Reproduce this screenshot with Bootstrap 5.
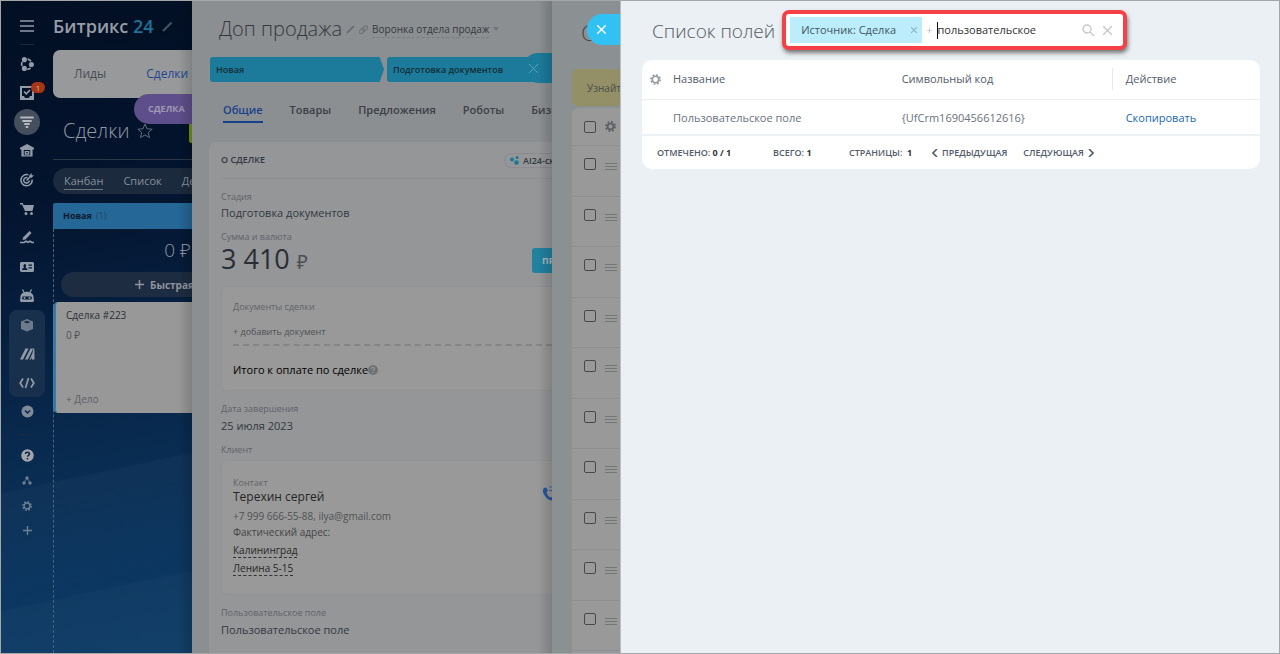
<!DOCTYPE html>
<html lang="ru">
<head>
<meta charset="utf-8">
<meta name="viewport" content="width=device-width, initial-scale=1">
<title>Битрикс 24</title>
<link rel="stylesheet" href="https://cdn.jsdelivr.net/npm/bootstrap@5.3.0/dist/css/bootstrap.min.css">
<style>
body{font-family:"Open Sans","Noto Sans",sans-serif;font-size:12px;line-height:16px;color:#535c69;background:#eaeff3}
a{text-decoration:none;color:inherit}
svg{display:block;flex:none}
button{font:inherit;color:inherit}
.shell{height:100vh;border:1px solid #a5a6a8;overflow:hidden}
.nowrap-all,.nowrap-all *{white-space:nowrap}
h1,h2{margin:0;font-weight:300;line-height:28px}
.t9{font-size:9px}.t10{font-size:10px}.t11{font-size:11px}
/* left area */
.portal{width:191px;background:linear-gradient(168deg,transparent 71%,rgba(255,255,255,.025) 71.2%,transparent 88%,rgba(255,255,255,.02) 88.2%),linear-gradient(170deg,#020f23 0,#03142e 30%,#082649 60%,#0b355e 84%,#0d3c66 100%)}
.portal::after,.deal::after{content:"";position:absolute;right:0;top:0;bottom:0;width:14px;background:linear-gradient(90deg,transparent,rgba(0,0,0,.16));pointer-events:none}
.side{width:52px;padding-top:10px;color:#929ba8}
.side a{width:36px;height:29px;display:flex;align-items:center;justify-content:center;position:relative}
.side .round{width:26px;height:26px;border-radius:50%;background:#454e5c;display:flex;align-items:center;justify-content:center}
.side .grp{background:#18304c;border-radius:8px}
.side .small-item{height:25px;color:#6f7f93}
.side .rule{width:14px;height:1px;background:#1b2a3c}
.counter{position:absolute;left:22px;top:4px;width:14px;height:11px;border-radius:6px;background:#a83615;color:#bbb;font-size:8px;line-height:11px;text-align:center}
.crm{min-width:0}
.logo{font-size:18px;font-weight:600;line-height:28px;color:#969da6;padding-top:11px}
.menu{background:#98999b;border-radius:7px 0 0 7px;height:48px;margin-top:10px;padding-left:21px;gap:40px;color:#484d54}
.tag-deal{position:absolute;left:133px;top:93px;width:58px;height:30px;border-radius:15px 0 0 15px;background:#5f4e8c;color:#9d98b4;font-weight:700;line-height:30px;padding-left:14px}
.green{width:3px;height:21px;background:#74911a;border-radius:2px 0 0 2px}
.headline{height:61px;padding-left:10px;color:#929aa5}
.pills{margin-top:8px;height:26px;background:#1b2a3d;border-radius:13px 0 0 13px;padding-left:11px;gap:20px;color:#88909b}
.stage{margin-top:9px;height:26px;background:#256797;border-radius:2px 0 0 0;padding-left:10px;color:#0c1a2c}
.column{border-left:1px dashed #49627e}
.total{padding:8px 1px 0 0;font-size:19px;font-weight:300;line-height:27px;color:#8b95a2}
.quick{margin:8px 0 5px 7px;width:131px;height:25px;border:0;border-radius:13px 0 0 13px;background:#1d2c41;color:#8e959f;padding:0 0 0 74px;gap:6px;overflow:hidden}
.deal-card{margin-left:-1px;height:111px;background:#989898;border-left:3px solid #3a7ba6;border-radius:5px 0 0 5px;padding:5px 0 6px 10px;color:#2d3136}
/* deal slider */
.deal{width:360px;background:#8c8f91;color:#33383f}
.steps{gap:3px;margin:14px 0 0 18px}
.steps button{height:25px;border:0;background:#1c7b9b;color:#122b35;font-weight:600;text-align:left;padding:0 6px;border-radius:3px;font-size:9px}
.steps .first{width:174px;flex:none;clip-path:polygon(0 0,97.5% 0,100% 50%,97.5% 100%,0 100%)}
.tabs{margin:17px 0 0 31px;gap:27px;font-weight:600;color:#3a4047}
.tabs a{height:24px;padding-top:3px;border-bottom:2px solid transparent}
.tabs .on{color:#18418b;border-color:#18418b}
.about{margin:19px 0 0 17px;background:#949698;border-radius:8px 0 0 0;padding-left:12px}
.about-head{height:37px;border-bottom:1px solid #8c8e90}
.chip{border:1px solid #898b8d;border-right:0;border-radius:8px 0 0 8px;height:15px;line-height:13px;padding-left:5px;gap:4px;width:48px;overflow:hidden;font-weight:600}
.lab{color:#5f6368;font-size:9px}
.inner{background:#999;border:1px solid #919293;border-right:0;border-radius:6px 0 0 6px;padding-left:11px}
.amount{font-size:27px;line-height:28px;color:#292e36}
.amount span{font-size:19px;line-height:19px;color:#4b5056}
.dash{border-bottom:2px dashed #858585}
.pay{width:20px;height:25px;overflow:hidden;border:0;border-radius:3px 0 0 3px;background:#21829f;color:#a8b9bf;font-weight:700;padding:0 0 0 10px;text-align:left}
.dotted{border-bottom:1px dashed #333;color:#262626}
.tabx{position:absolute;right:0;top:52px;width:29px;height:30px;border:0;border-radius:15px 0 0 15px;background:#1c7b9b;color:#5ba0b5;padding:0 0 0 6px}
/* settings slider */
.setup{width:68px;background:#8b9192}
.setup h2{padding:17px 0 0 29px;font-size:22px;color:#44484c}
.notice{margin:23px 0 2px 20px;height:37px;background:#939067;border-radius:5px 0 0 5px;padding-left:15px;color:#4b4c48}
.rows{margin-left:20px;background:#999;border-radius:6px 0 0 0}
.rows label{border-bottom:1px solid #8f8f8f;padding:12px 0 0 12px;height:50px;gap:9px;color:#73777c}
.rows label:nth-child(even){height:51px}
.rows label:first-child{height:38px;padding-top:13px}
.rows .form-check-input{width:12px;height:12px;margin:0;border:1px solid #484848;background-color:transparent;border-radius:2px}
.blue-x{position:absolute;right:-1px;top:13px;width:34px;height:31px;border:0;border-radius:15px 0 0 15px;background:#31c1f2;color:#fff;padding:0 0 0 10px}
/* top slider */
.top-panel{background:#ebf0f4;border-left:1px solid #b9bdc1;padding:9px 19px 0 21px}
.top-panel h1{font-size:19px;color:#545a61;padding:2px 7px 0 10px}
.finder{width:345px;height:40px;background:#fff;border:4px solid #f54145;border-radius:7px;box-shadow:1px 3px 4px rgba(0,0,0,.5);padding:0 11px 0 4px}
.token{height:26px;width:132px;background:#bcedfc;padding:0 5px 0 11px;color:#43545e}
.caret{width:1px;height:17px;background:#111;flex:none}
.finder input{border:0;outline:0;padding:0;min-width:0;color:#333}
.icon-btn{border:0;background:none;padding:0;color:#c3c6ca}
.grid-card{background:#fff;border-radius:10px;margin-top:10px}
.grid-card table{table-layout:fixed;width:100%;margin:0}
.grid-card th{font-weight:400;height:39px;padding:0;border-bottom:1px solid #eaeef1;color:#535c69}
.grid-card td{height:36px;padding:3px 0 0;border-bottom:2px solid #edf2f5;color:#6a727d}
.act{border-left:1px solid #e6e9ec;padding:3px 0 3px 13px}
.pager{height:33px;padding-left:15px;color:#535c69}
.pager b{color:#333;font-weight:700}
.w-total{width:116px}.w-all{width:76px}.w-pages{width:83px}
</style>
</head>
<body>
<div class="shell d-flex">

  <section class="portal d-flex position-relative flex-shrink-0 overflow-hidden nowrap-all">
    <nav class="side d-flex flex-column align-items-center flex-shrink-0" aria-label="Меню">
      <a href="#" aria-label="Меню"><svg width="14" height="12" viewBox="0 0 14 12" stroke="currentColor" stroke-width="1.3"><path d="M0 1h14M0 6h14M0 11h14"/></svg></a>
      <span class="rule mt-1 mb-1"></span>
      <a href="#" aria-label="Совместная работа"><svg width="14" height="14" viewBox="0 0 16 16" fill="currentColor"><circle cx="5" cy="3" r="2.900"/><circle cx="13" cy="8.500" r="2.900"/><circle cx="5" cy="13" r="2.900"/><path d="M9.500 2.500l2.500 1.700M2 6.500v3M9 14l2.500-1" stroke="currentColor" stroke-width="2" stroke-linecap="round"/></svg></a>
      <a href="#" aria-label="Задачи"><svg width="14" height="14" viewBox="0 0 14 14" fill="none" stroke="currentColor" stroke-width="2"><path d="M1 1h12v12H1z"/><path d="M1 10h3l1 2h4l1-2h3v3H1z" fill="currentColor" stroke="none"/><path d="M4 5.500l2.300 2.300L10 4" stroke-width="1.700"/></svg><span class="counter">1</span></a>
      <a href="#" aria-label="CRM"><span class="round"><svg width="14" height="12" viewBox="0 0 14 12" stroke="#b5b8bc" stroke-width="2" stroke-linecap="round"><path d="M1 1.500h12M3 5h8M5 8h4M6.500 11h1" /></svg></span></a>
      <a href="#" aria-label="Склад"><svg width="14" height="13" viewBox="0 0 15 14" fill="currentColor" fill-rule="evenodd"><path d="M7.500 0L15 4v2h-1.500v7.500h-12V6H0V4zM4 6.500V12h7V6.500z"/><path d="M5 7.500h5v4H5zm1.500 1.300V10H8.500V8.800z"/></svg></a>
      <a href="#" aria-label="Маркетинг"><svg width="14" height="14" viewBox="0 0 15 15" fill="none" stroke="currentColor" stroke-width="1.700"><path d="M9 2A6 6 0 1 0 13 7M8 5a3 3 0 1 0 2 3M7 8l4-4"/><path d="M10 4.500V2.500L12.500 0v2.500H15L12.500 5z" fill="currentColor" stroke="none"/></svg></a>
      <a href="#" aria-label="Магазины"><svg width="15" height="14" viewBox="0 0 15 14" fill="currentColor"><path d="M0 1h2.800l.7 2H14l-1.600 6H5L2 2.500H0z"/><circle cx="6" cy="11.500" r="1.500"/><circle cx="11.500" cy="11.500" r="1.500"/></svg></a>
      <a href="#" aria-label="Подпись"><svg width="15" height="13" viewBox="0 0 15 13" fill="currentColor"><path d="M9.500 0l2 2-6 6.500L2.500 9l.8-2.800z"/><path d="M0 11.500h4l2-1.200 2 1 2-1 2 1.200h2" fill="none" stroke="currentColor" stroke-width="1.700"/></svg></a>
      <a href="#" aria-label="Сотрудники"><svg width="14" height="12" viewBox="0 0 14 12" fill="currentColor" fill-rule="evenodd"><path d="M1 1h12l1 1v8l-1 1H1l-1-1V2zM2 9h5.500c0-1.500-1-2-2-2.300C6.500 5 6 3 4.800 3S3 5 4 6.700C3 7 2 7.500 2 9zM8.500 3.500v1.300H12V3.500zm0 2.700v1.300H12V6.200z"/></svg></a>
      <a href="#" aria-label="Роботизация"><svg width="14" height="13" viewBox="0 0 14 13" fill="currentColor" fill-rule="evenodd"><path d="M2.500 .5l1.500 3M11.500 .5L10 3.500" stroke="currentColor" stroke-width="1.300"/><path d="M.5 7.500C1 1 13 1 13.500 7.500L14 12l-1 1H1l-1-1zM3 7.500c-1.200 0-1.200 3 0 3h8c1.200 0 1.200-3 0-3z"/><circle cx="4.500" cy="9" r="1"/><circle cx="9.500" cy="9" r="1"/></svg></a>
      <div class="grp">
        <a href="#" aria-label="Каталог"><svg width="14" height="14" viewBox="0 0 14 14" fill="#6e7b8b" fill-rule="evenodd"><path d="M7 1l6 2.500v7.500L7 13.500 1 11V3.500zM3.500 4L7 5.500 10.500 4 7 2.700z"/></svg></a>
        <a href="#" aria-label="Маркет"><svg width="15" height="12" viewBox="0 0 15 12" fill="currentColor"><path d="M0 11.500L5.500 .5h3L3 11.500zM5 11.500L10.500 .5h2.800L7.800 11.500zM9.500 11.500l3-6.500 1-4.500h.8l.2 11h-2.500V9l-1 2.500z"/></svg></a>
        <a href="#" aria-label="Разработчикам"><svg width="16" height="12" viewBox="0 0 16 12" fill="none" stroke="currentColor" stroke-width="1.700"><path d="M4 1.500L1.200 6 4 10.500M12 1.500L14.800 6 12 10.500M9.500 1l-3 10"/></svg></a>
      </div>
      <a href="#" aria-label="Ещё"><svg width="13" height="13" viewBox="0 0 13 13"><circle cx="6.500" cy="6.500" r="6" fill="#7f8a99"/><path d="M4 5.500L6.500 8 9 5.500" fill="none" stroke="#0a2547" stroke-width="1.500"/></svg></a>
      <span class="rule mt-2 mb-2"></span>
      <a class="small-item" href="#" aria-label="Помощь"><svg width="13" height="13" viewBox="0 0 13 13"><circle cx="6.500" cy="6.500" r="6.200" fill="#a3a7ad"/><path d="M4.500 5c0-2.500 4-2.400 4 0 0 1.300-2 1.300-2 2.800M6.500 9v1.500" fill="none" stroke="#082348" stroke-width="1.500"/></svg></a>
      <a class="small-item" href="#" aria-label="Структура"><svg width="10" height="9" viewBox="0 0 10 9" fill="currentColor"><circle cx="5" cy="2" r="1.700"/><circle cx="2" cy="7" r="1.700"/><circle cx="8" cy="7" r="1.700"/><path d="M5 2L2.500 6M5 2l2.500 4" stroke="currentColor" stroke-width=".8"/></svg></a>
      <a class="small-item" href="#" aria-label="Настройки"><svg width="10" height="10" viewBox="0 0 12 12" fill="none" stroke="currentColor"><circle cx="6" cy="6" r="3.500" stroke-width="1.800"/><circle cx="6" cy="6" r="5" stroke-width="1.800" stroke-dasharray="2 1.930"/></svg></a>
      <a class="small-item" href="#" aria-label="Добавить"><svg width="9" height="9" viewBox="0 0 9 9" stroke="currentColor" stroke-width="1.400"><path d="M0 4.500h9M4.500 0v9"/></svg></a>
    </nav>

    <div class="crm d-flex flex-column flex-grow-1">
      <div class="logo d-flex align-items-center gap-2"><span>Битрикс <span style="color:#1d7397">24</span></span><svg width="11" height="11" viewBox="0 0 11 11" stroke="#46525f" stroke-width="2.200"><path d="M1 10L9.500 1.500"/></svg></div>
      <div class="menu d-flex align-items-center"><a href="#">Лиды</a><a href="#" style="color:#1e468f">Сделки</a></div>
      <div class="headline d-flex align-items-center">
        <h2 class="pt-1 fs-5">Сделки</h2>
        <svg class="ms-2 mt-1" width="16" height="16" viewBox="0 0 16 16" fill="none" stroke="#626d7a" stroke-width="1"><path d="M8 1l2 4.800 5.200.4-4 3.400 1.300 5L8 11.900l-4.500 2.700 1.300-5-4-3.400L6 5.800z"/></svg>
        <span class="green ms-auto mt-2"></span>
      </div>
      <div style="height:1px;background:#2c3848"></div>
      <div class="pills d-flex align-items-center t11"><a href="#" class="border-bottom border-secondary">Канбан</a><a href="#">Список</a><a href="#">Дела</a></div>
      <div class="stage d-flex align-items-center t9 gap-1"><span class="fw-bold">Новая</span><span style="color:#1b4768">(1)</span></div>
      <div class="column flex-grow-1">
        <div class="total text-end">0 ₽</div>
        <button class="quick d-flex align-items-center t10 fw-bold"><svg width="9" height="9" viewBox="0 0 9 9" stroke="currentColor" stroke-width="1.500"><path d="M0 4.500h9M4.500 0v9"/></svg>Быстрая сделка</button>
        <div class="deal-card d-flex flex-column t10"><span>Сделка #223</span><span class="mt-1" style="color:#4e5359">0 ₽</span><a href="#" class="mt-auto" style="color:#5c6065">+ Дело</a></div>
      </div>
    </div>
    <span class="tag-deal t9">СДЕЛКА</span>
  </section>

  <section class="deal position-relative flex-shrink-0 overflow-hidden nowrap-all">
    <div class="d-flex align-items-center" style="padding:14px 0 0 27px">
      <h2 style="font-size:20px">Доп продажа</h2>
      <svg class="ms-1" width="9" height="9" viewBox="0 0 9 9" stroke="#66696d" stroke-width="1.700"><path d="M1 8l7-7"/></svg>
      <svg class="mx-1" width="9" height="9" viewBox="0 0 9 9" fill="none" stroke="#6e7175"><rect x="-.500" y="4" width="6" height="3.500" rx="1.700" transform="rotate(-45 3 5.500)"/><rect x="3" y="1.700" width="6" height="3.500" rx="1.700" transform="rotate(-45 6 3.500)"/></svg>
      <a href="#" class="t10" style="border-bottom:1px dashed #797c7f">Воронка отдела продаж</a>
      <svg class="ms-1" width="6" height="4" fill="#727578"><path d="M0 0h6L3 4z"/></svg>
    </div>
    <div class="steps d-flex"><button class="first">Новая</button><button class="flex-grow-1">Подготовка документов</button></div>
    <nav class="tabs d-flex t11"><a href="#" class="on">Общие</a><a href="#">Товары</a><a href="#">Предложения</a><a href="#">Роботы</a><a href="#">Бизнес-процессы</a></nav>
    <div class="about">
      <div class="about-head d-flex align-items-center justify-content-between t9 fw-semibold"><span>О СДЕЛКЕ</span><span class="chip d-flex align-items-center t9"><svg width="9" height="9" viewBox="0 0 9 9" fill="#1b7897"><circle cx="2" cy="3.500" r="2"/><circle cx="7" cy="1.500" r="1.500"/><circle cx="6.500" cy="6.500" r="2.300"/></svg>AI24-скрипты</span></div>
      <div style="padding-top:10px"><div class="lab">Стадия</div><div class="t11">Подготовка документов</div></div>
      <div class="d-flex justify-content-between align-items-end mt-2">
        <div><div class="lab">Сумма и валюта</div><div class="amount">3 410 <span>₽</span></div></div>
        <button class="pay t9">ПРИНЯТЬ ОПЛАТУ</button>
      </div>
      <div class="inner" style="margin-top:13px;padding-top:12px;padding-bottom:12px">
        <div class="lab">Документы сделки</div>
        <div class="dash pb-1 mb-3 t9" style="margin-top:9px"><a href="#" style="color:#4f5154">+ добавить документ</a></div>
        <div class="d-flex align-items-center t11 text-black">Итого к оплате по сделке<svg width="10" height="10" viewBox="0 0 13 13"><circle cx="6.500" cy="6.500" r="6.500" fill="#707276"/><path d="M4.500 5c0-2.500 4-2.400 4 0 0 1.300-2 1.300-2 2.800M6.500 9v1.500" fill="none" stroke="#999" stroke-width="1.400"/></svg></div>
      </div>
      <div class="lab" style="margin-top:10px">Дата завершения</div><div class="t11" style="margin-top:1px">25 июля 2023</div>
      <div class="lab mt-2">Клиент</div>
      <div class="inner d-flex justify-content-between" style="margin-top:2px;padding-top:16px;padding-bottom:18px">
        <div>
          <div class="lab" style="line-height:12px">Контакт</div>
          <div style="color:#262626">Терехин сергей</div>
          <div class="t10" style="margin-top:3px;color:#4f5154">+7 999 666-55-88, ilya@gmail.com</div>
          <div class="t10" style="color:#434446">Фактический адрес:</div>
          <div class="t10" style="margin-top:2px"><span class="dotted">Калининград</span></div>
          <div class="t10" style="margin-top:2px"><span class="dotted">Ленина 5-15</span></div>
        </div>
        <svg class="mt-2" width="10" height="17" viewBox="0 0 10 17"><path d="M2 3C0 5 1 8 3 11s5 5 8 4l-1-3-2 .5C6 11 5 9 4.500 7l1.500-1-1.500-3.500z" fill="#28549b"/><path d="M7 2h3M7 5l3 1" stroke="#466aa0" stroke-width="1.200"/></svg>
      </div>
      <div class="lab" style="margin-top:10px">Пользовательское поле</div><div class="t11" style="padding:1px 0 30px">Пользовательское поле</div>
    </div>
    <button class="tabx" aria-label="Закрыть"><svg width="9" height="9" viewBox="0 0 9 9" stroke="currentColor"><path d="M0 0l9 9M9 0L0 9"/></svg></button>
  </section>

  <section class="setup position-relative flex-shrink-0 nowrap-all">
    <div class="overflow-hidden h-100">
      <h2>Список</h2>
      <div class="notice d-flex align-items-center t10">Узнайте больше</div>
      <div class="rows" id="rows">
        <label class="d-flex"><input type="checkbox" class="form-check-input flex-shrink-0" aria-label="Выбрать все"><svg width="11" height="11" viewBox="0 0 12 12" fill="none" stroke="#5e6266"><circle cx="6" cy="6" r="3.200" stroke-width="2"/><circle cx="6" cy="6" r="5" stroke-width="2" stroke-dasharray="2 1.930"/></svg></label>
      </div>
    </div>
    <button class="blue-x" aria-label="Закрыть"><svg width="9" height="9" viewBox="0 0 9 9" stroke="currentColor" stroke-width="1.400"><path d="M0 0l9 9M9 0L0 9"/></svg></button>
  </section>

  <main class="top-panel flex-grow-1 position-relative">
    <div class="d-flex align-items-center">
      <h1 class="text-nowrap">Список полей</h1>
      <div class="finder d-flex align-items-center t11">
        <span class="token d-flex align-items-center justify-content-between flex-shrink-0"><span class="text-nowrap">Источник: Сделка</span><button class="icon-btn" style="color:#8cb5c4" aria-label="Убрать"><svg width="6" height="6" viewBox="0 0 6 6" stroke="currentColor" stroke-width="1.200"><path d="M0 0l6 6M6 0L0 6"/></svg></button></span>
        <span class="ms-1 me-1" style="color:#b8bcc0">+</span>
        <span class="caret"></span>
        <input class="flex-grow-1" type="text" value="пользовательское" spellcheck="false" aria-label="Поиск">
        <button class="icon-btn" aria-label="Найти"><svg width="13" height="13" viewBox="0 0 13 13" fill="none" stroke="currentColor" stroke-width="1.300"><circle cx="5" cy="5" r="4"/><path d="M8 8l4 4"/></svg></button>
        <button class="icon-btn ms-2" aria-label="Очистить"><svg width="9" height="9" viewBox="0 0 9 9" stroke="currentColor" stroke-width="1.300"><path d="M0 0l9 9M9 0L0 9"/></svg></button>
      </div>
    </div>
    <div class="grid-card">
      <table class="t11">
        <colgroup><col style="width:31px"><col style="width:37%"><col><col style="width:24%"></colgroup>
        <thead><tr><th><button class="icon-btn ps-2 d-block" aria-label="Настройка"><svg width="11" height="11" viewBox="0 0 12 12" fill="none" stroke="#959ba3"><circle cx="6" cy="6" r="3.500" stroke-width="1.800"/><circle cx="6" cy="6" r="5" stroke-width="1.800" stroke-dasharray="2 1.930"/></svg></button></th><th>Название</th><th>Символьный код</th><th><div class="act">Действие</div></th></tr></thead>
        <tbody><tr><td></td><td>Пользовательское поле</td><td>{UfCrm1690456612616}</td><td><a href="#" style="color:#2067b0;padding-left:14px">Скопировать</a></td></tr></tbody>
      </table>
      <div class="pager d-flex align-items-center t9 fw-semibold text-nowrap">
        <span class="w-total">ОТМЕЧЕНО: <b>0 / 1</b></span><span class="w-all">ВСЕГО: <b>1</b></span><span class="w-pages">СТРАНИЦЫ: &nbsp;<b>1</b></span>
        <a href="#" class="d-flex align-items-center gap-1"><svg width="6" height="8" viewBox="0 0 6 8" fill="none" stroke="currentColor" stroke-width="1.600"><path d="M5 0L1 4l4 4"/></svg>ПРЕДЫДУЩАЯ</a>
        <a href="#" class="d-flex align-items-center gap-1 ms-3">СЛЕДУЮЩАЯ<svg width="6" height="8" viewBox="0 0 6 8" fill="none" stroke="currentColor" stroke-width="1.600"><path d="M1 0l4 4-4 4"/></svg></a>
      </div>
    </div>
  </main>
</div>
<script src="https://cdn.jsdelivr.net/npm/bootstrap@5.3.0/dist/js/bootstrap.bundle.min.js"></script>
<script>
// Rows of the field list in the settings slider
const rows = document.getElementById('rows');
for (let i = 1; i <= 11; i++) {
  rows.insertAdjacentHTML('beforeend', `<label class="d-flex"><input type="checkbox" class="form-check-input flex-shrink-0" aria-label="Поле ${i}"><svg class="mt-1" width="12" height="9" viewBox="0 0 12 9" stroke="currentColor"><path d="M0 1.500h12M0 4.500h12M0 7.500h12"/></svg></label>`);
}
</script>
</body>
</html>
